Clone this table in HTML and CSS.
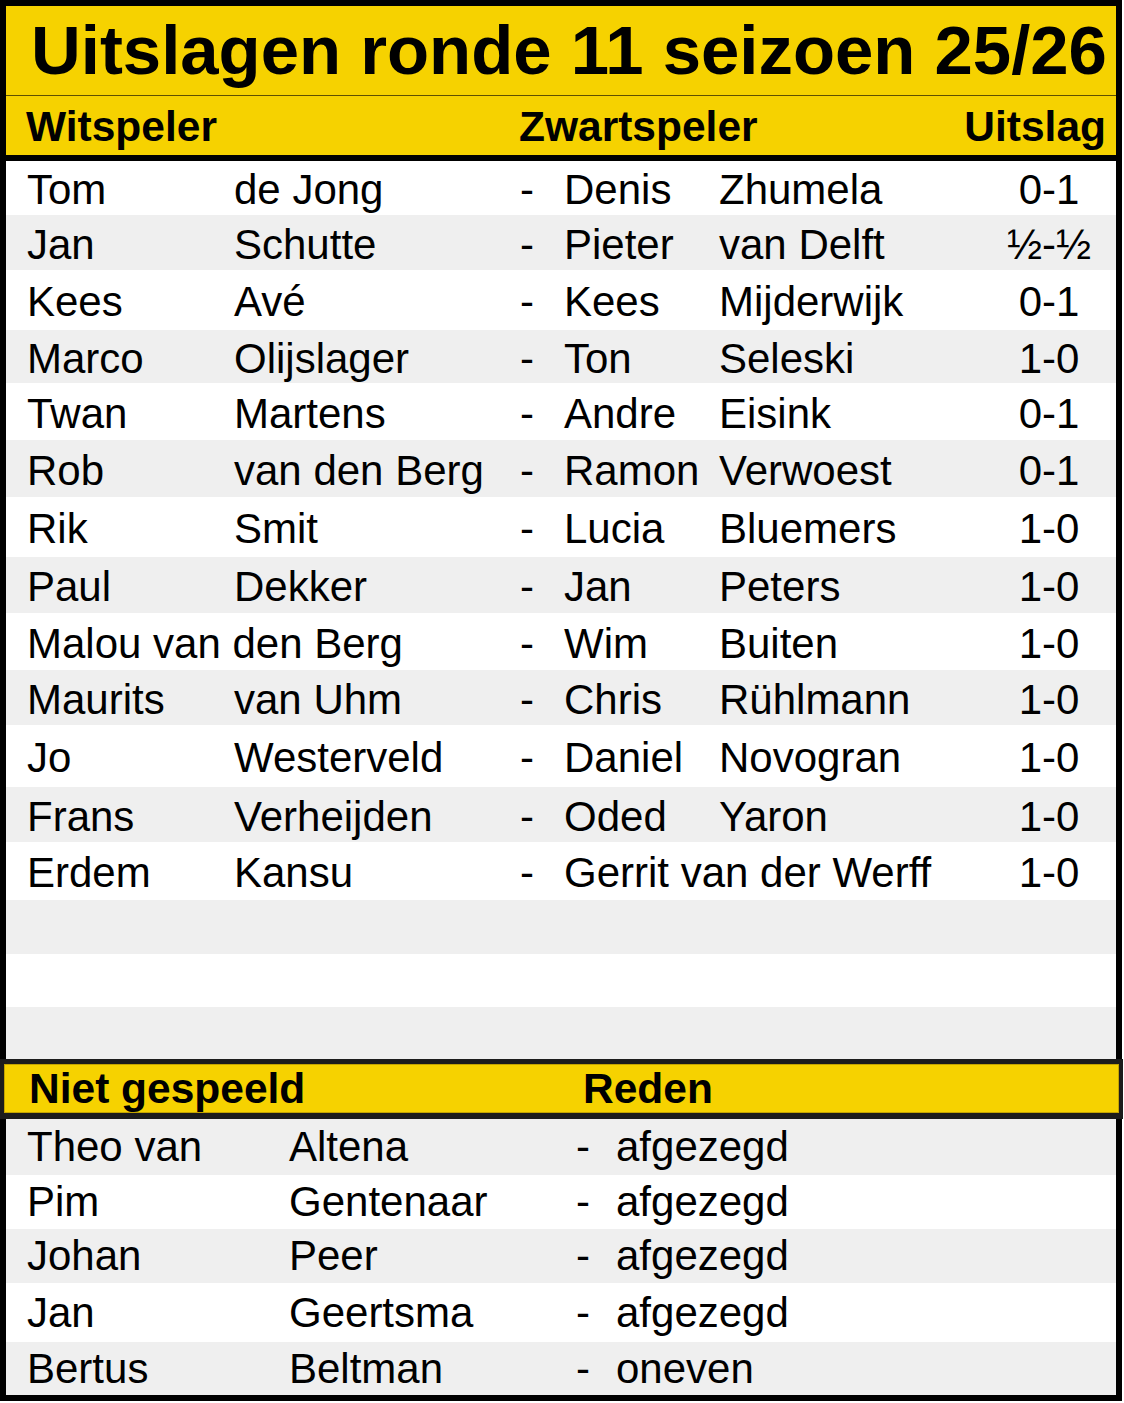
FILE: index.html
```html
<!DOCTYPE html>
<html lang="nl">
<head>
<meta charset="utf-8">
<title>Uitslagen ronde 11 seizoen 25/26</title>
<link rel="stylesheet" href="styles.css">
</head>
<body>
<div class="sheet">
  <div class="title">Uitslagen ronde 11 seizoen 25/26</div>
  <div class="head">
    <div>Witspeler</div>
    <div>Zwartspeler</div>
    <div class="right">Uitslag</div>
  </div>
  <div class="results">
    <div class="row h54"><div>Tom</div><div>de Jong</div><div>-</div><div>Denis</div><div>Zhumela</div><div class="res">0-1</div></div>
    <div class="row h55"><div>Jan</div><div>Schutte</div><div>-</div><div>Pieter</div><div>van Delft</div><div class="res">½-½</div></div>
    <div class="row h60"><div>Kees</div><div>Avé</div><div>-</div><div>Kees</div><div>Mijderwijk</div><div class="res">0-1</div></div>
    <div class="row h53"><div>Marco</div><div>Olijslager</div><div>-</div><div>Ton</div><div>Seleski</div><div class="res">1-0</div></div>
    <div class="row h57"><div>Twan</div><div>Martens</div><div>-</div><div>Andre</div><div>Eisink</div><div class="res">0-1</div></div>
    <div class="row h57"><div>Rob</div><div>van den Berg</div><div>-</div><div>Ramon</div><div>Verwoest</div><div class="res">0-1</div></div>
    <div class="row h60"><div>Rik</div><div>Smit</div><div>-</div><div>Lucia</div><div>Bluemers</div><div class="res">1-0</div></div>
    <div class="row h56"><div>Paul</div><div>Dekker</div><div>-</div><div>Jan</div><div>Peters</div><div class="res">1-0</div></div>
    <div class="row h57"><div class="span2">Malou van den Berg</div><div>-</div><div>Wim</div><div>Buiten</div><div class="res">1-0</div></div>
    <div class="row h55"><div>Maurits</div><div>van Uhm</div><div>-</div><div>Chris</div><div>Rühlmann</div><div class="res">1-0</div></div>
    <div class="row h62"><div>Jo</div><div>Westerveld</div><div>-</div><div>Daniel</div><div>Novogran</div><div class="res">1-0</div></div>
    <div class="row h55"><div>Frans</div><div>Verheijden</div><div>-</div><div>Oded</div><div>Yaron</div><div class="res">1-0</div></div>
    <div class="row h58"><div>Erdem</div><div>Kansu</div><div>-</div><div class="span2">Gerrit van der Werff</div><div class="res">1-0</div></div>
    <div class="row h54"></div>
    <div class="row h53"></div>
    <div class="row h52"></div>
  </div>
  <div class="lower-head">
    <div>Niet gespeeld</div>
    <div>Reden</div>
  </div>
  <div class="absent">
    <div class="arow h56"><div>Theo van</div><div>Altena</div><div>-</div><div>afgezegd</div></div>
    <div class="arow h54"><div>Pim</div><div>Gentenaar</div><div>-</div><div>afgezegd</div></div>
    <div class="arow h54"><div>Johan</div><div>Peer</div><div>-</div><div>afgezegd</div></div>
    <div class="arow h59"><div>Jan</div><div>Geertsma</div><div>-</div><div>afgezegd</div></div>
    <div class="arow h53"><div>Bertus</div><div>Beltman</div><div>-</div><div>oneven</div></div>
  </div>
</div>
</body>
</html>
```
FILE: styles.css
```css
* {
  box-sizing: border-box;
}

body {
  margin: 0;
  background: #ffffff;
  color: #000000;
  font-family: "Liberation Sans", Arial, sans-serif;
}

.sheet {
  width: 1122px;
  border: 6px solid #000000;
  background: #ffffff;
}

.title {
  height: 90px;
  display: flex;
  align-items: center;
  padding-left: 25px;
  background: #f6d200;
  border-bottom: 1px solid #5e5000;
  font-size: 68.9px;
  font-weight: bold;
  white-space: nowrap;
}

.head {
  height: 65px;
  display: grid;
  grid-template-columns: 493px 1fr auto;
  align-items: center;
  padding: 3px 10px 0 20px;
  background: #f6d200;
  border-bottom: 6px solid #000000;
  font-size: 42.5px;
  font-weight: bold;
  white-space: nowrap;
}

.right {
  text-align: right;
}

.row {
  display: grid;
  grid-template-columns: 207px 286px 44px 155px 263px 1fr;
  align-items: center;
  padding-top: 4px;
  padding-left: 21px;
  font-size: 42px;
  white-space: nowrap;
}

.results > .row:nth-child(even) {
  background: #efefef;
}

.res {
  text-align: center;
}

.span2 {
  grid-column: span 2;
}

.lower-head {
  height: 60px;
  margin: 0 -7px 0 -6px;
  display: grid;
  grid-template-columns: 554px 1fr;
  align-items: center;
  padding-left: 25px;
  background: #f6d200;
  border: 4px solid #1c1c1c;
  border-top-width: 5px;
  border-bottom-width: 6px;
  box-shadow: inset 0 0 0 1px #c4a400;
  font-size: 42.5px;
  font-weight: bold;
  white-space: nowrap;
}

.arow {
  display: grid;
  grid-template-columns: 262px 287px 40px 1fr;
  align-items: center;
  padding-left: 21px;
  font-size: 42px;
  white-space: nowrap;
}

.absent > .arow:nth-child(odd) {
  background: #efefef;
}

.h52 { height: 52px; }
.h53 { height: 53px; }
.h54 { height: 54px; }
.h55 { height: 55px; }
.h56 { height: 56px; }
.h57 { height: 57px; }
.h58 { height: 58px; }
.h59 { height: 59px; }
.h60 { height: 60px; }
.h62 { height: 62px; }
```
